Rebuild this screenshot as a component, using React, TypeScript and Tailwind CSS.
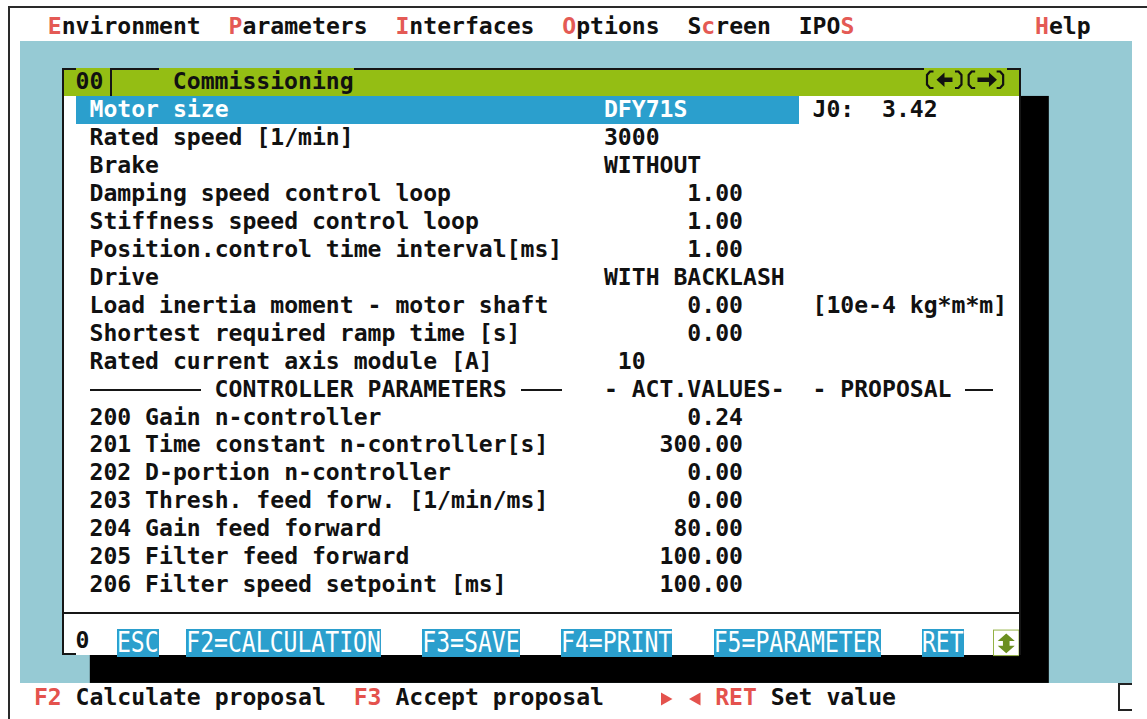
import React from "react";

// Text-mode commissioning screen: 80 columns, 25 rows.
// 1ch = one character cell (DejaVu Sans Mono at 23.1px), one row = 27.93px.

const ROW = "h-[27.93px] leading-[27.93px] whitespace-pre";

function Hot({ children }: { children: React.ReactNode }) {
  return <span className="text-[#e45a55]">{children}</span>;
}

function Rule({ className }: { className: string }) {
  return (
    <span className={`flex items-center ${className}`}>
      <span className="h-[2px] w-full bg-[#161616]" />
    </span>
  );
}

function Key({ label }: { label: string }) {
  return (
    <span className="mt-[2px] h-[27.93px] bg-[#2b9fcd] font-normal text-white">
      <span className="inline-block origin-[50%_12px] scale-y-[1.22]">{label}</span>
    </span>
  );
}

function ScrollMark() {
  return (
    <span className="mt-[2px] flex h-[27.93px] w-[2ch] pl-[1.3px]">
      <svg width="27.7" height="27.7" viewBox="0 0 28 28" className="block">
        <rect x="0.5" y="0.5" width="27" height="27" fill="#fff" stroke="#8fae3c" />
        <path d="M14 4 L23 12 H17.5 V17 H23 L14 25 L5 17 H10.5 V12 H5 Z" fill="#6b8f1f" />
      </svg>
    </span>
  );
}

function NavArrows() {
  const paren = (o: number) =>
    `M${o + 9.5} 3.5 H${o + 6} L${o + 3} 7 V16.5 L${o + 6} 20 H${o + 9.5}`;
  const close = (o: number) =>
    `M${o + 31} 3.5 H${o + 34.5} L${o + 37.5} 7 V16.5 L${o + 34.5} 20 H${o + 31}`;
  return (
    <svg width="83.46" height="27.93" viewBox="0 0 83.46 27.93" className="block w-[6ch]">
      <g fill="none" stroke="#111" strokeWidth="2.2">
        <path d={paren(0)} />
        <path d={close(0)} />
        <path d={paren(41.7)} />
        <path d={close(41.7)} />
      </g>
      <g fill="#111">
        {/* left arrow */}
        <path d="M12.5 11.75 L20.5 4.5 V9.5 H28.5 V14 H20.5 V19 Z" />
        {/* right arrow */}
        <path d="M73 11.75 L65 4.5 V9.5 H53.5 V14 H65 V19 Z" />
      </g>
    </svg>
  );
}

function Pointer({ dir }: { dir: "right" | "left" }) {
  return (
    <span className="flex w-[1ch]">
      <svg width="13.91" height="27.93" viewBox="0 0 13.91 27.93" className="block">
        {dir === "right" ? (
          <path d="M1 9.5 L12.5 16 L1 22.5 Z" fill="#e4524d" />
        ) : (
          <path d="M13.5 9.5 L2 16 L13.5 22.5 Z" fill="#e4524d" />
        )}
      </svg>
    </span>
  );
}

const machineRows: [string, string][] = [
  ["Rated speed [1/min]", "3000"],
  ["Brake", "WITHOUT"],
  ["Damping speed control loop", "      1.00"],
  ["Stiffness speed control loop", "      1.00"],
  ["Position.control time interval[ms]", "      1.00"],
  ["Drive", "WITH BACKLASH"],
  ["Load inertia moment - motor shaft", "      0.00     [10e-4 kg*m*m]"],
  ["Shortest required ramp time [s]", "      0.00"],
  ["Rated current axis module [A]", " 10"],
];

const controllerRows: [string, string][] = [
  ["200 Gain n-controller", "      0.24"],
  ["201 Time constant n-controller[s]", "    300.00"],
  ["202 D-portion n-controller", "      0.00"],
  ["203 Thresh. feed forw. [1/min/ms]", "      0.00"],
  ["204 Gain feed forward", "     80.00"],
  ["205 Filter feed forward", "    100.00"],
  ["206 Filter speed setpoint [ms]", "    100.00"],
];

function FieldRow({ label, value }: { label: string; value: string }) {
  return (
    <div className={`${ROW} pl-[calc(2ch-2px)]`}>
      {label.padEnd(37)}
      {value}
    </div>
  );
}

function CommissioningWindow() {
  return (
    <div className="h-[586.53px] w-[69ch] border-x-2 border-[#161616] bg-white shadow-[27.82px_27.93px_0_0_#000]">
      {/* title bar */}
      <div className={`flex ${ROW} bg-[#94be14] text-[#111]`}>
        <span className="w-[calc(1ch-2px)] border-t-2 border-[#161616]" />
        <span className="w-[2ch]">00</span>
        <span className="w-[0.5ch]" />
        <span className="w-[0.5ch] border-l-2 border-t-2 border-[#161616]" />
        <span className="w-[3ch] border-t-2 border-[#161616]" />
        <span className="w-[14ch]"> Commissioning</span>
        <span className="w-[41ch] border-t-2 border-[#161616]" />
        <NavArrows />
        <span className="w-[calc(1ch-2px)] border-t-2 border-[#161616]" />
      </div>

      {/* selected row */}
      <div className={`flex ${ROW} pl-[calc(1ch-2px)]`}>
        <span className="w-[52ch] bg-[#2b9fcd] text-white">
          {" " + "Motor size".padEnd(37) + "DFY71S"}
        </span>
        <span>{" J0:  3.42"}</span>
      </div>

      {machineRows.map(([l, v]) => (
        <FieldRow key={l} label={l} value={v} />
      ))}

      {/* section header */}
      <div className={`flex ${ROW} pl-[calc(2ch-2px)]`}>
        <Rule className="w-[8ch]" />
        <span className="w-[23ch]"> CONTROLLER PARAMETERS </span>
        <Rule className="w-[3ch]" />
        <span className="w-[29ch]">{"   - ACT.VALUES-  - PROPOSAL "}</span>
        <Rule className="w-[2ch]" />
      </div>

      {controllerRows.map(([l, v]) => (
        <FieldRow key={l} label={l} value={v} />
      ))}

      {/* divider */}
      <div className="flex h-[27.93px] items-center">
        <div className="h-[2px] w-full bg-[#161616]" />
      </div>

      {/* function keys */}
      <div className={`flex ${ROW}`}>
        <span className="w-[calc(1ch-2px)] border-b-2 border-[#161616]" />
        <span className="w-[3ch]">0</span>
        <Key label="ESC" />
        <span className="w-[2ch]" />
        <Key label="F2=CALCULATION" />
        <span className="w-[3ch]" />
        <Key label="F3=SAVE" />
        <span className="w-[3ch]" />
        <Key label="F4=PRINT" />
        <span className="w-[3ch]" />
        <Key label="F5=PARAMETER" />
        <span className="w-[3ch]" />
        <Key label="RET" />
        <span className="w-[2ch]" />
        <ScrollMark />
      </div>
    </div>
  );
}

export default function App() {
  return (
    <div className="h-[719px] w-[1147px] overflow-hidden bg-white font-['DejaVu_Sans_Mono',monospace] text-[23.1px] font-bold text-[#111]">
      <div className="ml-[8px] mt-[6px] h-[713px] border-l-2 border-t-2 border-[#2a2a2a] pl-[10px] pt-[4.6px]">
        <div className="w-[80ch]">
          {/* menu bar */}
          <div className={ROW}>
            {"  "}
            <Hot>E</Hot>nvironment{"  "}
            <Hot>P</Hot>arameters{"  "}
            <Hot>I</Hot>nterfaces{"  "}
            <Hot>O</Hot>ptions{"  "}S<Hot>c</Hot>reen{"  "}IPO<Hot>S</Hot>
            {"             "}
            <Hot>H</Hot>elp
          </div>

          {/* desktop */}
          <div className="h-[642.39px] bg-[#96cad4] pl-[3ch] pt-[27.93px]">
            <CommissioningWindow />
          </div>

          {/* status line */}
          <div className="flex h-[27.93px] whitespace-pre leading-[28.5px]">
            <span> </span>
            <span className="text-[#e4524d]">F2</span>
            <span> Calculate proposal  </span>
            <span className="text-[#e4524d]">F3</span>
            <span> Accept proposal    </span>
            <Pointer dir="right" />
            <span> </span>
            <Pointer dir="left" />
            <span> </span>
            <span className="text-[#e4524d]">RET</span>
            <span> Set value</span>
            <span className="ml-auto h-[27.93px] w-[1ch] border-y-2 border-l-2 border-[#222]" />
          </div>
        </div>
      </div>
    </div>
  );
}
